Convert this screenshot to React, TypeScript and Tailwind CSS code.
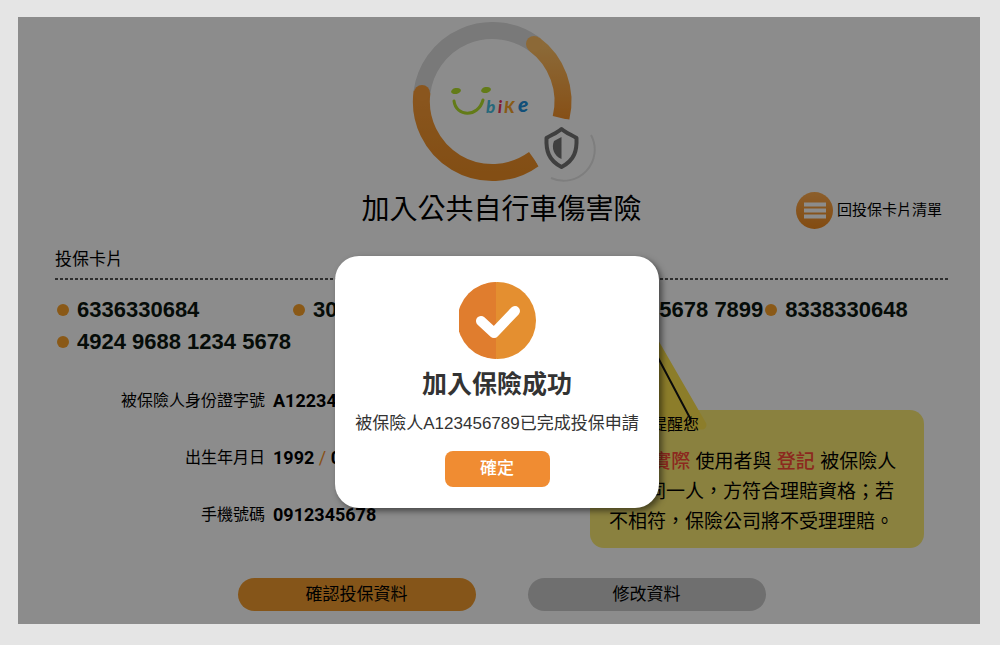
import { useState } from "react";

const CARDS = [
  "6336330684",
  "3000 8888 1234 5678",
  "4000 1234 5678 7899",
  "8338330648",
  "4924 9688 1234 5678",
];

function RingLogo() {
  return (
    <svg width="188" height="164" viewBox="0 0 188 164" role="img" aria-label="Ubike">
      <defs>
        <linearGradient id="ringRight" x1="0" y1="0" x2="0" y2="1">
          <stop offset="0" stopColor="#ffc268" />
          <stop offset="1" stopColor="#f5922a" />
        </linearGradient>
        <linearGradient id="ringLeft" x1="0" y1="0" x2="0" y2="1">
          <stop offset="0" stopColor="#fb9d38" />
          <stop offset="1" stopColor="#ee8f26" />
        </linearGradient>
      </defs>
      <g fill="none" strokeWidth="17">
        <path d="M14 72 A71 71 0 0 1 126 24" stroke="#dcdcdc" />
        <path d="M126 24 A71 71 0 0 1 153 98" stroke="url(#ringRight)" />
        <path d="M14 72 A71 71 0 0 0 126 139" stroke="url(#ringLeft)" />
      </g>
      <circle cx="126" cy="24" r="8" fill="#ffbf64" />
      <circle cx="14" cy="73" r="8" fill="#fb9d38" />

      {/* smile */}
      <g fill="none" stroke="#b4e02c" strokeWidth="3" strokeLinecap="round">
        <path d="M46 81 C48 97 70 98 75 80" />
      </g>
      <ellipse cx="48" cy="71" rx="5" ry="3" fill="#b4e02c" transform="rotate(-12 48 71)" />
      <ellipse cx="78" cy="70" rx="5" ry="3" fill="#b4e02c" transform="rotate(-12 78 70)" />
      <g className="font-['Lato',sans-serif] font-black italic">
        <text x="78" y="93" fontSize="17" fill="#48c0e0">b</text>
        <text x="90" y="93" fontSize="16" fill="#f0305a">i</text>
        <text x="96" y="93" fontSize="16" fill="#f8a428">K</text>
        <text x="110" y="92" fontSize="21" fill="#2090dc">e</text>
      </g>

      {/* shield badge */}
      <circle cx="155" cy="129" r="30" fill="#fff" />
      <path d="M183 115 A31 31 0 0 1 143 158" fill="none" stroke="#e6e6e6" strokeWidth="2" />
      <path
        d="M153.500 109 C149 113 143 115 138.500 118 C138 130 140 140 153.500 147 C167 140 169 130 168.500 118 C164 115 158 113 153.500 109 Z"
        fill="#fff"
        stroke="#747474"
        strokeWidth="4"
        strokeLinejoin="round"
      />
      <path d="M153.500 117 L146 121 C143 128 146 136 153.500 139 Z" fill="#747474" />
    </svg>
  );
}

function WarningSign() {
  return (
    <svg width="116" height="102" viewBox="0 0 116 102" aria-hidden="true">
      <path
        d="M58 5 L110 95 L6 95 Z"
        fill="#ffe34e"
        stroke="#ffe34e"
        strokeWidth="9"
        strokeLinejoin="round"
      />
      <path
        d="M21 95 C16 93 16 91 18 88 L54 22 C57 17 60 17 63 22 L98 88 C100 92 98 95 94 95"
        fill="none"
        stroke="#151515"
        strokeWidth="2"
        strokeLinecap="round"
      />
      <path d="M51 44 H67 L63 78 H55 Z" fill="#151515" />
    </svg>
  );
}

function SuccessIcon() {
  return (
    <svg width="77" height="77" viewBox="0 0 77 77" aria-hidden="true">
      <circle cx="38.500" cy="38.500" r="38.500" fill="#e48f30" />
      <path d="M37 0 A38.500 38.500 0 0 0 37 77 Z" fill="#e07d2e" />
      <path
        d="M22 39 L35 51 L56 29"
        fill="none"
        stroke="#fff"
        strokeWidth="10"
        strokeLinecap="round"
        strokeLinejoin="round"
      />
    </svg>
  );
}

function Slash() {
  return <span className="font-normal text-[#f8922a]"> / </span>;
}

export default function App() {
  const [open, setOpen] = useState(true);

  return (
    <div className="min-h-screen bg-[#e5e5e5] pt-[17px] pr-5 pb-5 pl-[18px] font-['Liberation_Sans','Noto_Sans_CJK_TC',sans-serif] text-black">
      <main className="relative bg-white pt-[3px] pr-8 pb-[13px] pl-[37px]">
        <div className="flex justify-center">
          <RingLogo />
        </div>

        <header className="mt-1.5 grid grid-cols-[1fr_auto_1fr] items-center">
          <h1 className="col-start-2 text-[28px] leading-10">加入公共自行車傷害險</h1>
          <a href="#cards" className="flex items-center gap-1 justify-self-end pr-1.5 text-[15px]">
            <svg width="37" height="37" viewBox="0 0 37 37" aria-hidden="true">
              <defs>
                <linearGradient id="menuFill" x1="0" y1="0" x2="0" y2="1">
                  <stop offset="0" stopColor="#ffac50" />
                  <stop offset="1" stopColor="#ee8a20" />
                </linearGradient>
              </defs>
              <circle cx="18.500" cy="18.500" r="18.500" fill="url(#menuFill)" />
              <path d="M8 12.500 H30 M8 18.500 H30 M8 24.500 H30" stroke="#fff" strokeWidth="4" />
            </svg>
            回投保卡片清單
          </a>
        </header>

        {/* Cards */}
        <section id="cards">
          <h2 className="mt-[18px] text-[17px] leading-6">投保卡片</h2>
          <div className="mt-1.5 h-[2px] bg-[repeating-linear-gradient(90deg,#555_0_3px,transparent_3px_5px)]" />
          <ul className="mt-3.5 grid grid-cols-[166fr_256fr_252fr_218fr] text-[22px] leading-8 font-bold text-[#0c160f]">
            {CARDS.map((card) => (
              <li key={card} className="flex items-center gap-2 whitespace-nowrap">
                <span className="ml-0.5 size-3 shrink-0 rounded-full bg-[#fba32a]" />
                {card}
              </li>
            ))}
          </ul>
        </section>

        <div className="flex items-start justify-between">
          <dl className="mt-[31px] grid grid-cols-[210px_auto] items-center gap-x-2 gap-y-[33px] text-base leading-6">
            <dt className="text-right">被保險人身份證字號</dt>
            <dd className="font-['Roboto',sans-serif] text-lg leading-6 font-bold">A122345678</dd>
            <dt className="text-right">出生年月日</dt>
            <dd className="font-['Roboto',sans-serif] text-lg leading-6 font-bold">
              1992
              <Slash />
              01
              <Slash />
              01
            </dd>
            <dt className="text-right">手機號碼</dt>
            <dd className="font-['Roboto',sans-serif] text-lg leading-6 font-bold">0912345678</dd>
          </dl>

          <aside className="relative mt-[52px] mr-6 w-[334px] rounded-[14px] bg-[#fbeb74] px-[19px] pt-1 pb-[11px]">
            <div className="absolute -top-20 left-0.5">
              <WarningSign />
            </div>
            <h3 className="relative pl-[26px] text-base leading-[22px]">小提醒您</h3>
            <p className="mt-[11px] text-[19px] leading-[30px] whitespace-nowrap">
              車輛 <strong className="font-medium text-[#ff4a38]">實際</strong> 使用者與{" "}
              <strong className="font-medium text-[#ff4a38]">登記</strong> 被保險人
              <br />
              須為同一人，方符合理賠資格；若
              <br />
              不相符，保險公司將不受理理賠。
            </p>
          </aside>
        </div>

        <div className="mt-[30px] flex justify-center gap-[52px] text-[17px]">
          <button type="button" className="h-[33px] w-[238px] rounded-full bg-[#f29c2f]">
            確認投保資料
          </button>
          <button type="button" className="h-[33px] w-[238px] rounded-full bg-[#cacaca]">
            修改資料
          </button>
        </div>

        {/* Success dialog */}
        {open && (
          <div className="absolute inset-0 flex items-start justify-center bg-black/45 pt-[239px] pr-1">
            <div
              role="dialog"
              aria-modal="true"
              aria-labelledby="dialog-title"
              className="flex w-[324px] flex-col items-center rounded-3xl bg-white pt-[26px] pb-[21px] text-[#333] shadow-[3px_3px_6px_rgba(0,0,0,0.5)]"
            >
              <SuccessIcon />
              <h2 id="dialog-title" className="mt-[9px] text-[25px] leading-8 font-bold">
                加入保險成功
              </h2>
              <p className="mt-3 text-[17px] leading-6">被保險人A123456789已完成投保申請</p>
              <button
                type="button"
                onClick={() => setOpen(false)}
                className="mt-[15px] h-9 w-[105px] rounded-lg bg-[#f08c32] text-[17px] font-medium text-white"
              >
                確定
              </button>
            </div>
          </div>
        )}
      </main>
    </div>
  );
}
